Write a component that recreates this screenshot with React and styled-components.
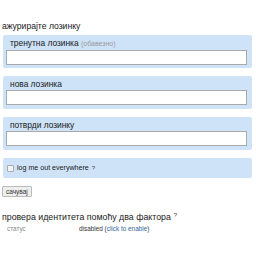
import styled, { createGlobalStyle } from "styled-components";

const GlobalStyle = createGlobalStyle`
  body {
    margin: 0;
    background: #fff;
    font-family: "Liberation Sans", Arial, sans-serif;
  }
`;

const fields = [
  { label: "тренутна лозинка", note: "(обавезно)" },
  { label: "нова лозинка" },
  { label: "потврди лозинку" },
];

export default function App() {
  return (
    <>
      <GlobalStyle />
      <Page>
        <Title>ажурирајте лозинку</Title>
        {fields.map((f) => (
          <FieldBox key={f.label}>
            <Label>
              {f.label} {f.note && <Note>{f.note}</Note>}
            </Label>
            <Input type="password" />
          </FieldBox>
        ))}
        <CheckRow>
          <Check type="checkbox" />
          <CheckText>log me out everywhere</CheckText>
          <Help>?</Help>
        </CheckRow>
        <SaveButton>сачувај</SaveButton>
        <Heading>
          провера идентитета помоћу два фактора<Help>?</Help>
        </Heading>
        <StatusRow>
          <StatusKey>статус</StatusKey>
          <StatusValue>
            disabled (<Link href="#">click to enable</Link>)
          </StatusValue>
        </StatusRow>
      </Page>
    </>
  );
}

const Page = styled.div`
  display: flex;
  flex-direction: column;
  align-items: flex-start;
  padding: 21px 4px 0 3px;
`;

const Title = styled.h1`
  margin: 0 0 3px -1px;
  font-size: 8.6px;
  font-weight: normal;
  color: #1a1a1a;
  line-height: 11px;
`;

const FieldBox = styled.div`
  box-sizing: border-box;
  align-self: stretch;
  height: 33px;
  margin-bottom: 8px;
  padding: 3px 5px 0 3px;
  background: #cee3f8;
  border-radius: 2px;
  display: flex;
  flex-direction: column;
`;

const Label = styled.div`
  font-size: 8.4px;
  line-height: 10px;
  color: #1a1a1a;
  padding-left: 4px;
  margin-bottom: 1px;
`;

const Note = styled.span`
  font-size: 7px;
  color: #999;
`;

const Input = styled.input`
  box-sizing: border-box;
  width: 100%;
  height: 15px;
  margin: 0;
  padding: 0 2px;
  border: 1px solid #a9a9a9;
  background: #fff;
  outline: none;
`;

const CheckRow = styled.label`
  box-sizing: border-box;
  align-self: stretch;
  height: 20px;
  display: flex;
  align-items: center;
  padding-left: 4px;
  background: #cee3f8;
  border-radius: 2px;
  font-size: 7.1px;
  color: #1a1a1a;
`;

const Check = styled.input`
  appearance: none;
  box-sizing: border-box;
  width: 7px;
  height: 7px;
  margin: 0 3px 0 0;
  background: #f4f4f4;
  border: 1px solid #aaa;
  border-radius: 1px;
`;

const CheckText = styled.span`
  line-height: 10px;
`;

const Help = styled.sup`
  font-size: 6px;
  color: #444;
  margin-left: 3px;
  vertical-align: 3px;
`;

const SaveButton = styled.button`
  margin: 8px 0 0 -1px;
  height: 11px;
  padding: 0 3px;
  font-family: "Liberation Sans", Arial, sans-serif;
  font-size: 6.5px;
  line-height: 9px;
  color: #333;
  background: #eee;
  border: 1px solid #bbb;
  border-radius: 1px;
`;

const Heading = styled.h2`
  margin: 12px 0 0 -1px;
  font-size: 8.8px;
  line-height: 12px;
  font-weight: normal;
  color: #1a1a1a;
`;

const StatusRow = styled.div`
  display: grid;
  grid-template-columns: 72px auto;
  margin-top: 1px;
  padding-left: 4px;
  font-size: 6.4px;
  line-height: 9px;
`;

const StatusKey = styled.span`
  color: #888;
`;

const StatusValue = styled.span`
  color: #333;
`;

const Link = styled.a`
  color: #369;
  text-decoration: none;
`;
